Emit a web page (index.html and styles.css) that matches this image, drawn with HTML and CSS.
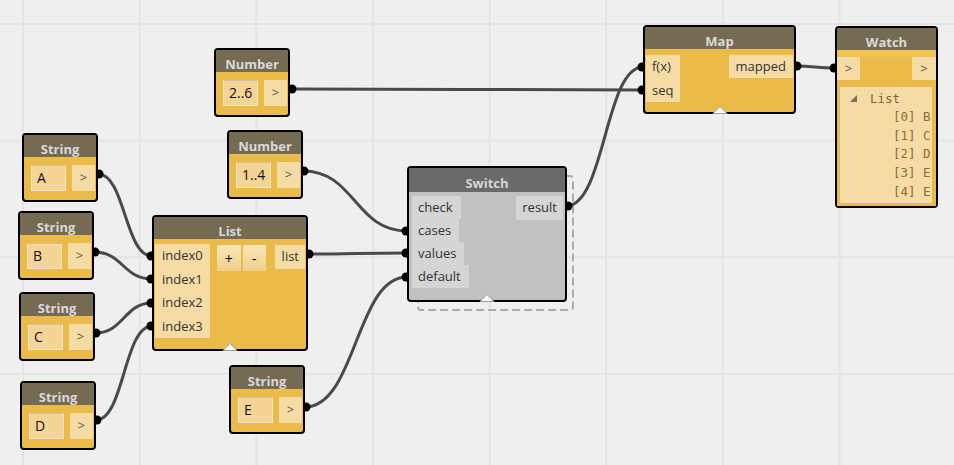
FILE: index.html
```html
<!DOCTYPE html>
<html lang="en">
<head>
<meta charset="utf-8">
<title>Dynamo graph</title>
<link rel="stylesheet" href="styles.css">
</head>
<body>
<div class="canvas">
  <svg class="wires" width="954" height="465" viewBox="0 0 954 465">
    <rect class="preview" x="418" y="176" width="155" height="134" rx="3"/>
    <g class="wire">
      <path d="M290,89 C466,89 466,90 643,90"/>
      <path d="M98,174 C125,174 125,256 152,256"/>
      <path d="M94,252 C123,252 123,279 152,279"/>
      <path d="M95,333 C124,333 124,303 152,303"/>
      <path d="M96,420 C124,420 124,326 152,326"/>
      <path d="M303,171 C355,171 355,231 407,231"/>
      <path d="M307,254 C357,254 357,253 407,253"/>
      <path d="M305,407 C356,407 356,277 407,277"/>
      <path d="M566,206 C605,206 605,67 643,67"/>
      <path d="M795,66 C815,66 815,68 835,68"/>
    </g>
    <g class="dots">
      <circle cx="292" cy="89" r="4.5"/>
      <circle cx="99" cy="174" r="4.5"/>
      <circle cx="95" cy="252" r="4.5"/>
      <circle cx="96" cy="333" r="4.5"/>
      <circle cx="97" cy="420" r="4.5"/>
      <circle cx="304" cy="171" r="4.5"/>
      <circle cx="306" cy="407" r="4.5"/>
      <circle cx="309" cy="254" r="4.5"/>
      <circle cx="568" cy="206" r="4.5"/>
      <circle cx="797" cy="66" r="4.5"/>
      <circle cx="151" cy="256" r="4.5"/>
      <circle cx="151" cy="279" r="4.5"/>
      <circle cx="151" cy="303" r="4.5"/>
      <circle cx="151" cy="326" r="4.5"/>
      <circle cx="406" cy="231" r="4.5"/>
      <circle cx="406" cy="253" r="4.5"/>
      <circle cx="406" cy="277" r="4.5"/>
      <circle cx="642" cy="67" r="4.5"/>
      <circle cx="642" cy="90" r="4.5"/>
      <circle cx="834" cy="68" r="4.5"/>
    </g>
  </svg>

  <div class="node value n-num26">
    <div class="hd">Number</div>
    <div class="bd"><div class="field">2..6</div><div class="btn">&gt;</div></div>
  </div>
  <div class="node value n-num14">
    <div class="hd">Number</div>
    <div class="bd"><div class="field">1..4</div><div class="btn">&gt;</div></div>
  </div>
  <div class="node value n-stra">
    <div class="hd">String</div>
    <div class="bd"><div class="field">A</div><div class="btn">&gt;</div></div>
  </div>
  <div class="node value n-strb">
    <div class="hd">String</div>
    <div class="bd"><div class="field">B</div><div class="btn">&gt;</div></div>
  </div>
  <div class="node value n-strc">
    <div class="hd">String</div>
    <div class="bd"><div class="field">C</div><div class="btn">&gt;</div></div>
  </div>
  <div class="node value n-strd">
    <div class="hd">String</div>
    <div class="bd"><div class="field">D</div><div class="btn">&gt;</div></div>
  </div>
  <div class="node value n-stre">
    <div class="hd">String</div>
    <div class="bd"><div class="field">E</div><div class="btn">&gt;</div></div>
  </div>

  <div class="node n-list">
    <div class="hd">List</div>
    <div class="bd">
      <div class="ins stretch">
        <div class="port">index0</div>
        <div class="port">index1</div>
        <div class="port">index2</div>
        <div class="port">index3</div>
      </div>
      <div class="ctrl"><div class="pm">+</div><div class="pm minus">-</div></div>
      <div class="outs"><div class="port">list</div></div>
    </div>
    <svg class="grip" width="16" height="9" viewBox="0 0 16 9"><polygon points="1,8.5 8,1.5 15,8.5"/></svg>
  </div>

  <div class="node n-switch">
    <div class="hd">Switch</div>
    <div class="bd">
      <div class="ins">
        <div class="port">check</div>
        <div class="port">cases</div>
        <div class="port">values</div>
        <div class="port">default</div>
      </div>
      <div class="outs"><div class="port">result</div></div>
    </div>
    <svg class="grip" width="16" height="9" viewBox="0 0 16 9"><polygon points="1,8.5 8,1.5 15,8.5"/></svg>
  </div>

  <div class="node n-map">
    <div class="hd">Map</div>
    <div class="bd">
      <div class="ins stretch">
        <div class="port">f(x)</div>
        <div class="port">seq</div>
      </div>
      <div class="outs"><div class="port">mapped</div></div>
    </div>
    <svg class="grip" width="16" height="9" viewBox="0 0 16 9"><polygon points="1,8.5 8,1.5 15,8.5"/></svg>
  </div>

  <div class="node n-watch">
    <div class="hd">Watch</div>
    <div class="bd">
      <div class="wbtns"><div class="btn">&gt;</div><div class="btn wide">&gt;</div></div>
      <div class="panel">
        <div class="root"><svg class="tri" width="7" height="7" viewBox="0 0 7 7"><polygon points="7,0 7,7 0,7"/></svg><span>List</span></div>
        <div class="item">[0] B</div>
        <div class="item">[1] C</div>
        <div class="item">[2] D</div>
        <div class="item">[3] E</div>
        <div class="item">[4] E</div>
      </div>
    </div>
  </div>
</div>
</body>
</html>
```

FILE: styles.css
```css
html, body {
  margin: 0;
  padding: 0;
}
body {
  width: 954px;
  height: 465px;
  overflow: hidden;
  font-family: "Open Sans", "Noto Sans", sans-serif;
}
.canvas {
  position: relative;
  width: 954px;
  height: 465px;
  background-color: #efefef;
  background-image:
    linear-gradient(to right, #e4e4e4 2px, transparent 2px),
    linear-gradient(to bottom, #e4e4e4 2px, transparent 2px);
  background-size: 116.67px 116.67px;
  background-position: 22px 23px;
}
.wires {
  position: absolute;
  left: 0;
  top: 0;
  z-index: 0;
}
.wire path {
  fill: none;
  stroke: #4a4a4a;
  stroke-width: 3;
}
.dots circle {
  fill: #000;
}
.preview {
  fill: none;
  stroke: #ababab;
  stroke-width: 2;
  stroke-dasharray: 8 4;
}

/* nodes */
.node {
  position: absolute;
  z-index: 2;
  box-sizing: border-box;
  border: 2px solid #000;
  border-radius: 4px;
  background: #ebbb4a;
  display: flex;
  flex-direction: column;
}
.hd {
  flex: none;
  box-sizing: border-box;
  height: 22px;
  padding-top: 6px;
  line-height: 16px;
  background: #756a52;
  color: #d9d9d9;
  font-weight: 700;
  font-size: 13px;
  text-align: center;
  border-radius: 2px 2px 0 0;
}
.bd {
  flex: 1;
  display: flex;
}

/* value nodes */
.value {
  width: 76px;
  height: 69px;
}
.value .bd {
  gap: 6px;
  padding: 8px 1px 0 7px;
}
.field {
  box-sizing: border-box;
  width: 35px;
  height: 26px;
  border: 1px solid #f1e6c9;
  border-top-color: #cdc1a2;
  background: #f4d595;
  color: #111;
  font-size: 14px;
  line-height: 24px;
  padding-left: 5px;
}
.btn {
  width: 23px;
  height: 26px;
  background: #f5dca4;
  color: #555;
  font-size: 13px;
  line-height: 25px;
  text-align: center;
}
.n-num26 { left: 214px; top: 48px; }
.n-num14 { left: 227px; top: 130px; }
.n-stra { left: 22px; top: 133px; }
.n-strb { left: 18px; top: 211px; }
.n-strc { left: 19px; top: 292px; }
.n-strd { left: 20px; top: 381px; }
.n-stre { left: 229px; top: 365px; }

/* ports */
.ins {
  display: flex;
  flex-direction: column;
  align-items: flex-start;
}
.ins.stretch {
  align-items: stretch;
}
.port {
  background: #f5dca4;
  color: #333;
  font-size: 13px;
  height: 23.5px;
  line-height: 23px;
  padding: 0 7px 0 7px;
  white-space: nowrap;
}
.outs {
  margin-left: auto;
}
.grip {
  position: absolute;
  left: 50%;
  bottom: -2px;
  margin-left: -8px;
}
.grip polygon {
  fill: #fff;
  stroke: #9a9a9a;
  stroke-width: 1;
}

/* List */
.n-list {
  left: 152px;
  top: 215px;
  width: 156px;
  height: 136px;
}
.n-list .bd {
  padding: 5px 1px 0 1px;
}
.ctrl {
  display: flex;
  gap: 2px;
  margin-left: 7px;
  margin-top: 1px;
}
.pm {
  width: 24px;
  height: 26px;
  background: linear-gradient(#f9e6b9, #eed08a);
  color: #000;
  font-size: 14px;
  line-height: 28px;
  text-align: center;
}
.pm.minus {
  width: 23px;
}
.n-list .outs {
  margin-top: 1px;
}
.n-list .outs .port {
  padding: 0 6px 0 7px;
}

/* Switch */
.n-switch {
  left: 407px;
  top: 166px;
  width: 160px;
  height: 136px;
  background: #c1c1c1;
}
.n-switch .hd {
  height: 24px;
  padding-top: 7px;
  background: #6a6a6a;
  color: #d6d6d6;
}
.n-switch .bd {
  padding: 4px 2px 0 3px;
}
.n-switch .port {
  background: #d5d5d5;
  height: 23px;
  padding: 0 8px 0 6px;
}
.n-switch .outs .port {
  height: 24px;
  padding: 0 6px 0 6px;
}

/* Map */
.n-map {
  left: 643px;
  top: 25px;
  width: 153px;
  height: 89px;
}
.n-map .bd {
  padding: 6px 1px 0 1px;
}
.n-map .ins .port {
  padding: 0 7px 0 6px;
}
.n-map .outs .port {
  height: 23px;
  padding: 0 7px;
}

/* Watch */
.n-watch {
  left: 835px;
  top: 26px;
  width: 103px;
  height: 182px;
}
.n-watch .bd {
  flex-direction: column;
  background: linear-gradient(#f3c757, #ebbb4a 12px);
}
.wbtns {
  display: flex;
  justify-content: space-between;
  margin-top: 7px;
}
.wbtns .btn {
  height: 23px;
  line-height: 22px;
}
.wbtns .btn.wide {
  width: 24px;
}
.panel {
  flex: 1;
  margin: 7px 4px 3px 3px;
  background: #f5dca4;
  font-family: "DejaVu Sans Mono", "Liberation Mono", monospace;
  font-size: 12.5px;
  color: #8f6a3a;
  overflow: hidden;
}
.root {
  display: flex;
  align-items: center;
  height: 20px;
  margin-top: 1px;
  padding-left: 10px;
  color: #7d6646;
}
.tri {
  margin-right: 13px;
}
.tri polygon {
  fill: #7b7060;
}
.item {
  height: 18.7px;
  line-height: 18.7px;
  padding-left: 53px;
  white-space: pre;
}
```
